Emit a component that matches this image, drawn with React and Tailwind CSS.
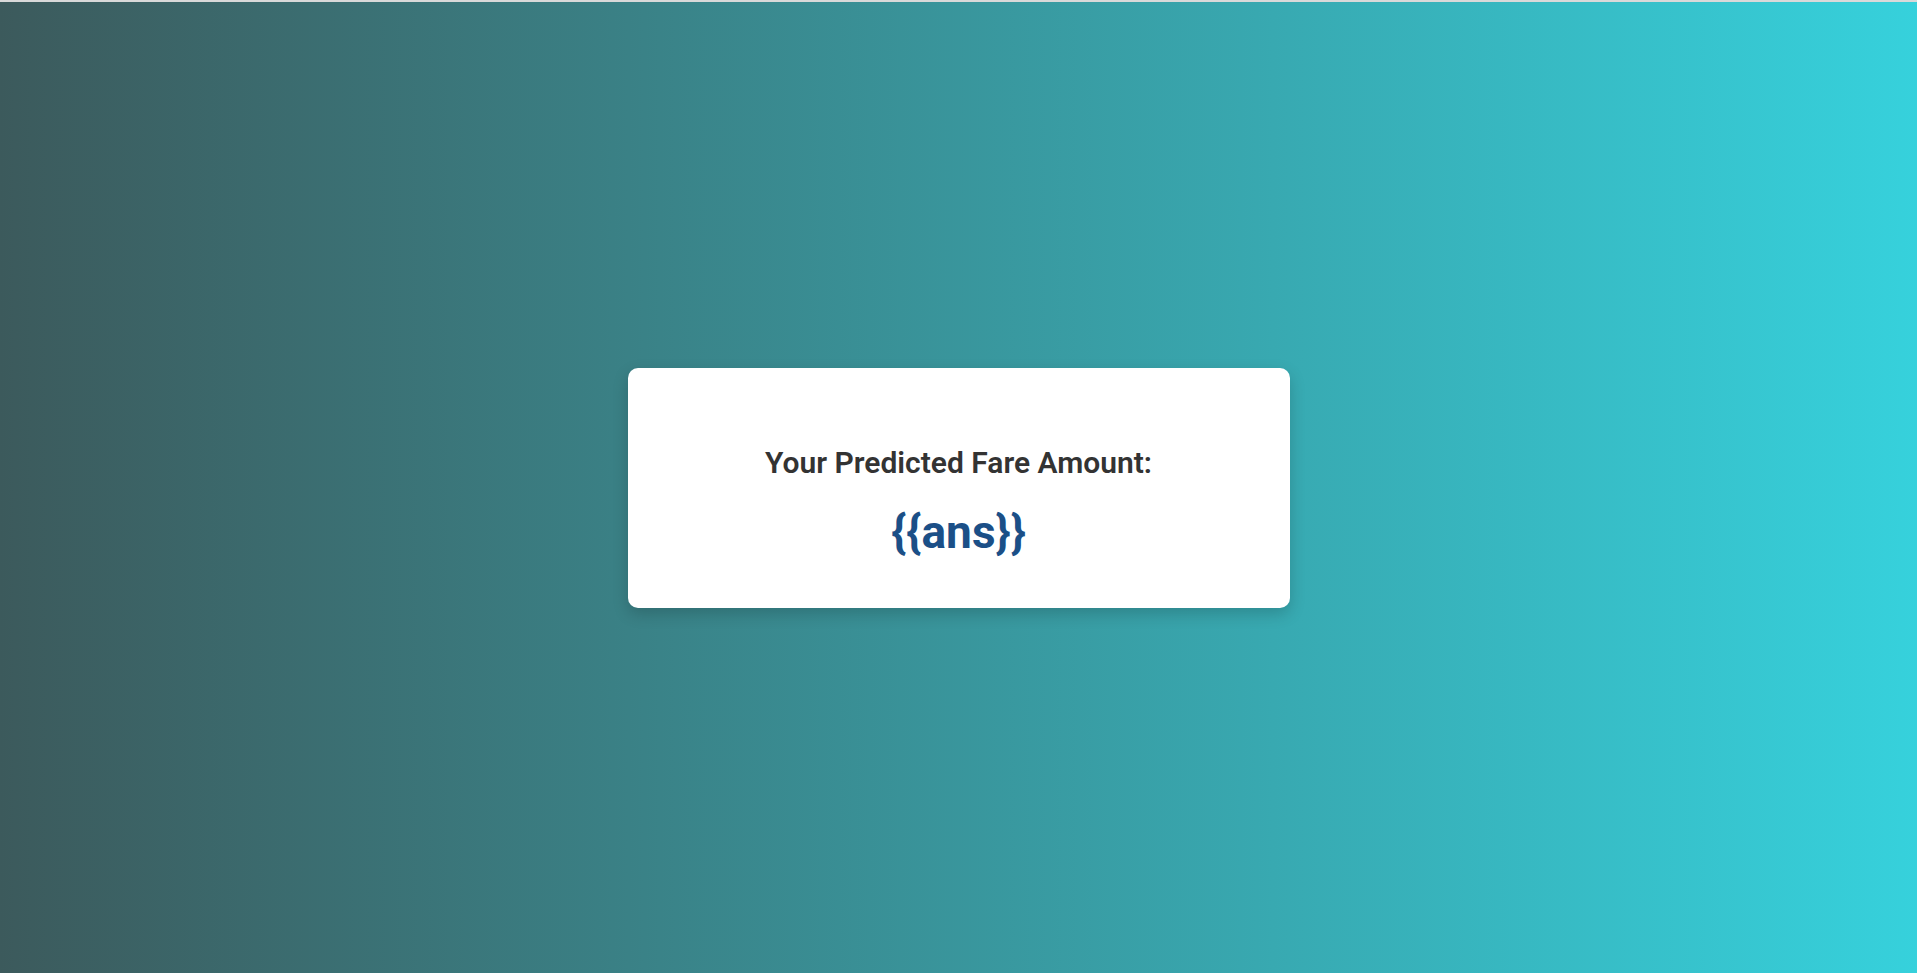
import React from 'react'

const App = () => {
  return (
    <div className="h-screen w-full flex flex-col font-['Roboto',sans-serif]">
      <div className="h-[2px] bg-[#d9d9d9]" />
      <div className="flex-1 flex items-center justify-center bg-[linear-gradient(to_right,#3c5a5c,#36d1dc)]">
        <div className="w-[662px] h-[240px] bg-white rounded-[10px] shadow-[0_6px_16px_rgba(0,0,0,0.18)] flex flex-col items-center justify-center pt-6">
          <h2 className="text-[30px] font-semibold text-[#333333] leading-tight">
            Your Predicted Fare Amount:
          </h2>
          <p className="mt-7 text-[46px] font-bold text-[#1b4f87] leading-none">
            {'{{ans}}'}
          </p>
        </div>
      </div>
    </div>
  )
}

export default App
